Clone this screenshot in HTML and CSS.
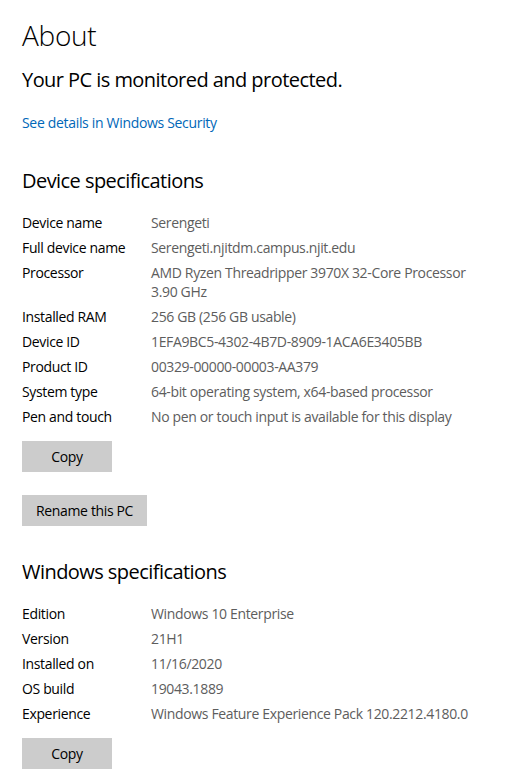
FILE: index.html
```html
<!DOCTYPE html>
<html lang="en">
<head>
<meta charset="utf-8">
<title>About</title>
<link rel="stylesheet" href="styles.css">
</head>
<body>
<main class="page">
  <h1 class="title">About</h1>
  <p class="status">Your PC is monitored and protected.</p>
  <a class="link" href="#">See details in Windows Security</a>

  <h2 class="section-title device-title">Device specifications</h2>
  <dl class="specs">
    <div class="row"><dt>Device name</dt><dd>Serengeti</dd></div>
    <div class="row"><dt>Full device name</dt><dd>Serengeti.njitdm.campus.njit.edu</dd></div>
    <div class="row"><dt>Processor</dt><dd>AMD Ryzen Threadripper 3970X 32-Core Processor<br>3.90 GHz</dd></div>
    <div class="row"><dt>Installed RAM</dt><dd>256 GB (256 GB usable)</dd></div>
    <div class="row"><dt>Device ID</dt><dd>1EFA9BC5-4302-4B7D-8909-1ACA6E3405BB</dd></div>
    <div class="row"><dt>Product ID</dt><dd>00329-00000-00003-AA379</dd></div>
    <div class="row"><dt>System type</dt><dd>64-bit operating system, x64-based processor</dd></div>
    <div class="row"><dt>Pen and touch</dt><dd>No pen or touch input is available for this display</dd></div>
  </dl>
  <button class="btn btn-copy" type="button">Copy</button>
  <button class="btn btn-rename" type="button">Rename this PC</button>

  <h2 class="section-title windows-title">Windows specifications</h2>
  <dl class="specs">
    <div class="row"><dt>Edition</dt><dd>Windows 10 Enterprise</dd></div>
    <div class="row"><dt>Version</dt><dd>21H1</dd></div>
    <div class="row"><dt>Installed on</dt><dd>11/16/2020</dd></div>
    <div class="row"><dt>OS build</dt><dd>19043.1889</dd></div>
    <div class="row"><dt>Experience</dt><dd>Windows Feature Experience Pack 120.2212.4180.0</dd></div>
  </dl>
  <button class="btn btn-copy" type="button">Copy</button>
</main>
</body>
</html>
```

FILE: styles.css
```css
html, body {
  margin: 0;
  padding: 0;
  background: #ffffff;
}

body {
  font-family: "Open Sans", "Noto Sans", sans-serif;
  color: #000000;
}

.page {
  display: flex;
  flex-direction: column;
  align-items: flex-start;
  padding: 15px 0 0 22px;
}

.title {
  margin: 0;
  font-size: 28px;
  line-height: 40px;
  font-weight: 300;
  letter-spacing: -0.3px;
}

.status {
  margin: 11px 0 0 0;
  font-size: 20px;
  line-height: 28px;
  font-weight: 400;
  letter-spacing: -0.55px;
}

.link {
  margin-top: 19px;
  font-size: 14px;
  line-height: 20px;
  color: #0067b8;
  text-decoration: none;
  letter-spacing: -0.32px;
}

.section-title {
  margin: 0;
  font-size: 20px;
  line-height: 28px;
  font-weight: 400;
  letter-spacing: -0.55px;
}

.device-title {
  margin-top: 34px;
}

.windows-title {
  margin-top: 32px;
}

.specs {
  margin: 18px 0 0 0;
  display: flex;
  flex-direction: column;
  gap: 6px;
}

.row {
  display: flex;
  font-size: 14px;
  line-height: 19px;
  letter-spacing: -0.35px;
}

.row dt {
  width: 129px;
  flex: none;
  color: #000000;
}

.row dd {
  margin: 0;
  color: #5d5d5d;
}

.btn {
  margin-top: 15px;
  height: 31px;
  border: none;
  background: #cccccc;
  font-family: inherit;
  font-size: 14px;
  letter-spacing: -0.35px;
  color: #000000;
  padding: 0 14px;
}

.btn-copy {
  width: 90px;
}

.btn-rename {
  margin-top: 23px;
}
```
